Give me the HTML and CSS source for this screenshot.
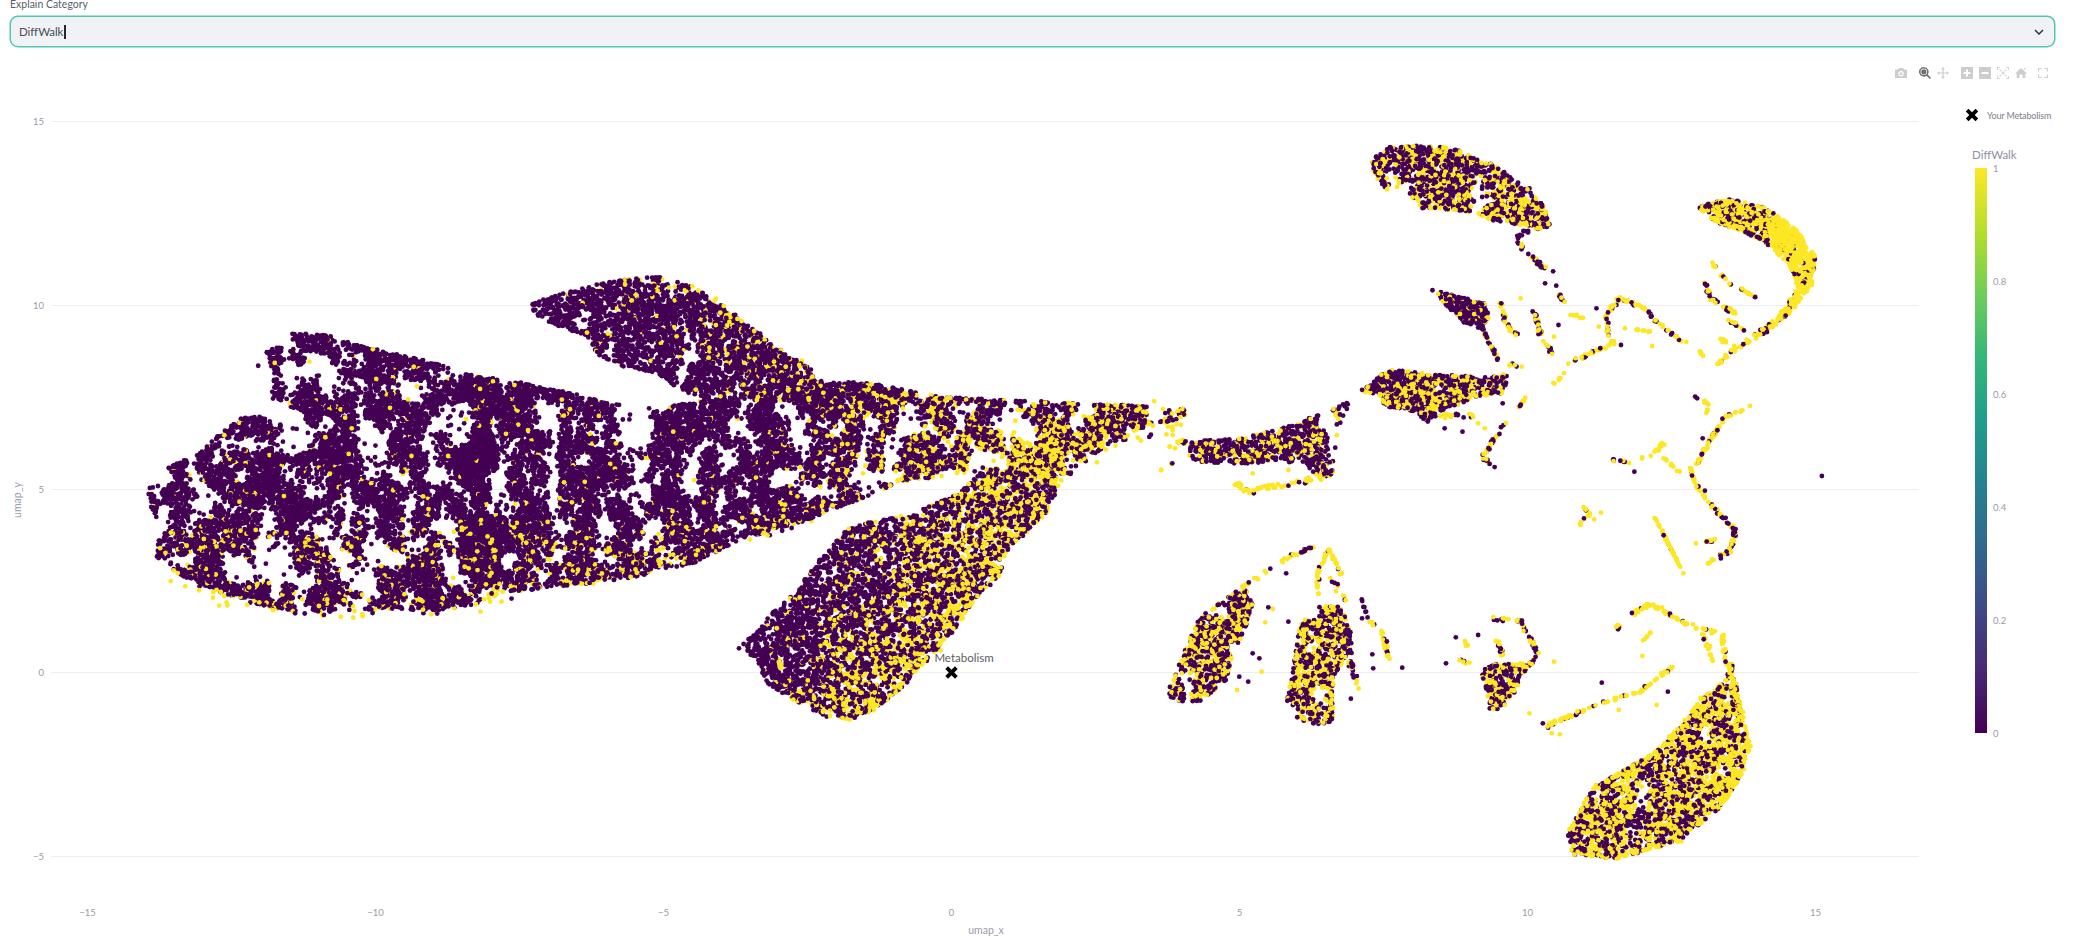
FILE: index.html
```html
<!DOCTYPE html>
<html lang="en">
<head>
<meta charset="utf-8">
<title>Explain Category</title>
<link rel="stylesheet" href="styles.css">
</head>
<body>
<main class="app">
  <section class="field">
    <label class="field-label">Explain Category</label>
    <div class="select">
      <span class="select-value">DiffWalk</span><span class="caret"></span>
      <svg class="chevron" viewBox="0 0 10 6"><path d="M1 1l4 4 4-4"/></svg>
    </div>
  </section>
  <section class="chart">
    <svg class="plot" viewBox="0 60 2083 883">
      <defs>
        <linearGradient id="viridis" x1="0" y1="1" x2="0" y2="0">
          <stop offset="0" stop-color="#440154"/><stop offset=".111" stop-color="#482878"/>
          <stop offset=".222" stop-color="#3e4989"/><stop offset=".333" stop-color="#31688e"/>
          <stop offset=".444" stop-color="#26828e"/><stop offset=".556" stop-color="#1f9e89"/>
          <stop offset=".667" stop-color="#35b779"/><stop offset=".778" stop-color="#6ece58"/>
          <stop offset=".889" stop-color="#b5de2b"/><stop offset="1" stop-color="#fde725"/>
        </linearGradient>
      </defs>
      <g class="grid">
        <path d="M51 121.500H1919"/><path d="M51 305.500H1919"/><path d="M51 489.500H1919"/><path d="M51 672.500H1919"/><path d="M51 856.500H1919"/>
      </g>
      <g class="ticks ticks-y">
        <text x="44" y="124.500">15</text><text x="44" y="308.500">10</text><text x="44" y="492.500">5</text><text x="44" y="675.500">0</text><text x="44" y="859.500">−5</text>
      </g>
      <g class="ticks ticks-x">
        <text x="87.500" y="916">−15</text><text x="375.500" y="916">−10</text><text x="663.500" y="916">−5</text><text x="951.500" y="916">0</text><text x="1239.500" y="916">5</text><text x="1527.500" y="916">10</text><text x="1815.500" y="916">15</text>
      </g>
      <text class="axis-title" x="986" y="934">umap_x</text>
      <text class="axis-title" transform="translate(21 500) rotate(-90)">umap_y</text>
      <text class="annotation" x="964" y="662">Metabolism</text>
      <path class="marker" transform="translate(951.500 672.500)" d="M-3.500-6.200L0-2.700 3.500-6.200 6.200-3.500 2.700 0 6.200 3.500 3.500 6.200 0 2.700-3.500 6.200-6.200 3.500-2.700 0-6.200-3.500z"/>
      <path class="marker" transform="translate(1972 115)" d="M-3.500-6.200L0-2.700 3.500-6.200 6.200-3.500 2.700 0 6.200 3.500 3.500 6.200 0 2.700-3.500 6.200-6.200 3.500-2.700 0-6.200-3.500z"/>
      <text class="legend-text" x="1987" y="118.500">Your Metabolism</text>
      <text class="colorbar-title" x="1972" y="159">DiffWalk</text>
      <rect class="colorbar" x="1975" y="168" width="12" height="565"/>
      <g class="ticks cb-ticks">
        <text x="1993" y="172">1</text><text x="1993" y="285">0.8</text><text x="1993" y="398">0.6</text><text x="1993" y="511">0.4</text><text x="1993" y="624">0.2</text><text x="1993" y="737">0</text>
      </g>
    </svg>
    <canvas id="points" class="points" width="2083" height="883"></canvas>
    <div class="modebar">
      <div class="mb-group">
        <svg class="mb-icon" viewBox="0 0 12 12"><path fill-rule="evenodd" d="M0 2.500h3L4 1h4l1 1.500h3V11H0zM6 4a2.700 2.700 0 100 5.400A2.700 2.700 0 006 4zm0 1.200a1.500 1.500 0 110 3 1.500 1.500 0 010-3z"/></svg>
      </div>
      <div class="mb-group">
        <svg class="mb-icon mb-active" viewBox="0 0 12 12"><path fill-rule="evenodd" d="M4.800 0a4.800 4.800 0 013.900 7.600L12 10.900 10.900 12 7.600 8.700A4.800 4.800 0 114.800 0zm0 1.500a3.300 3.300 0 100 6.600 3.300 3.300 0 000-6.600z"/><circle cx="4.800" cy="4.800" r="2.600"/></svg>
        <svg class="mb-icon" viewBox="0 0 12 12"><path d="M6 0l2 2.200H6.600v3.200h3.200V4L12 6 9.800 8V6.600H6.600v3.200H8L6 12 4 9.800h1.400V6.600H2.200V8L0 6l2.200-2v1.400h3.200V2.200H4z"/></svg>
      </div>
      <div class="mb-group">
        <svg class="mb-icon" viewBox="0 0 12 12"><path fill-rule="evenodd" d="M0 0h12v12H0zM5 2.500V5H2.500v2H5v2.500h2V7h2.500V5H7V2.500z"/></svg>
        <svg class="mb-icon" viewBox="0 0 12 12"><path fill-rule="evenodd" d="M0 0h12v12H0zM2.500 5v2h7V5z"/></svg>
        <svg class="mb-icon" viewBox="0 0 12 12"><path d="M0 0h3v.8H.8V3H0zM9 0h3v3h-.8V.8H9zM0 9h.8v2.200H3v.8H0zM11.200 9h.8v3H9v-.8h2.200zM2.500 2.500L4.500 3 3.800 3.700 6 5.300 8.200 3.700 7.500 3 9.500 2.500 9 4.500 8.300 3.800 6.700 6 8.300 8.200 9 7.500 9.500 9.500 7.500 9 8.200 8.300 6 6.700 3.800 8.300 4.500 9 2.500 9.500 3 7.500 3.700 8.200 5.300 6 3.700 3.800 3 4.500z"/></svg>
        <svg class="mb-icon" viewBox="0 0 12 12"><path d="M6 1l6 5.500h-1.700V11H7.500V7.500h-3V11H1.700V6.500H0zM9 1h1.400v2.200L9 2z"/></svg>
      </div>
      <div class="mb-group mb-last">
        <svg class="mb-icon" viewBox="0 0 12 12"><path d="M1 1h3.500v1H2v2.500H1zM7.500 1H11v3.500h-1V2H7.500zM1 7.500h1V10h2.500v1H1zM10 7.500h1V11H7.500v-1H10z"/></svg>
      </div>
    </div>
  </section>
</main>
<script src="script.js"></script>
</body>
</html>
```
FILE: styles.css
```css
* { box-sizing: border-box; }
html, body { margin: 0; height: 100%; overflow: hidden; background: #fff; }
body { font-family: "Lato", "Open Sans", sans-serif; color: #31333f; }
.app { width: 2083px; height: 943px; display: flex; flex-direction: column; }
.field { padding: 0 28px 0 10px; margin-top: -4px; }
.field-label { display: block; height: 20px; font-size: 10.500px; line-height: 16px; color: #5b5e6b; }
.select { height: 31px; display: flex; align-items: center; padding-left: 8px; border: 1px solid #50c8b0; border-radius: 8px; background: #f0f2f6; box-shadow: 0 0 0 .5px #50c8b0; }
.select-value { font-size: 11.500px; letter-spacing: -.1px; color: #4a4c58; }
.caret { width: 2px; height: 14px; margin-left: 1px; background: #262730; }
.chevron { width: 10px; height: 6px; margin-left: auto; margin-right: 10px; fill: none; stroke: #31333f; stroke-width: 1.500; }
.chart { position: relative; flex: 1; margin-top: 13px; }
.plot { display: block; width: 2083px; height: 883px; }
.points { position: absolute; left: 0; top: 0; }
.grid path { stroke: #eceef4; stroke-width: 1; fill: none; }
.ticks text { font-size: 9.500px; fill: #9a9ba8; }
.ticks-y text { text-anchor: end; }
.ticks-x text { text-anchor: middle; }
.axis-title { font-size: 10.500px; fill: #9a9cac; text-anchor: middle; }
.annotation { font-size: 11.500px; fill: #5c5c5c; text-anchor: middle; }
.marker { fill: #000; }
.legend-text { font-size: 9px; letter-spacing: -.15px; fill: #7c7d8a; }
.colorbar-title { font-size: 11.500px; fill: #8f90a2; }
.colorbar { fill: url(#viridis); }
.modebar { position: absolute; top: 7px; right: 34px; display: flex; gap: 12px; }
.mb-group { display: flex; gap: 6px; }
.mb-last { margin-left: -2px; }
.mb-icon { width: 12px; height: 12px; display: block; fill: #cdcdcd; }
.mb-active { fill: #6e6e6e; }
```
FILE: script.js
```js
(function () {
  var canvas = document.getElementById('points');
  var ctx = canvas.getContext('2d');
  var PURPLE = '#440154', YELLOW = '#fde725';

  // Seeded random numbers so that every load draws the same cloud.
  var seed = 20240611;
  function rnd() {
    seed = (seed + 0x6D2B79F5) | 0;
    var t = Math.imul(seed ^ (seed >>> 15), 1 | seed);
    t = (t + Math.imul(t ^ (t >>> 7), 61 | t)) ^ t;
    return ((t ^ (t >>> 14)) >>> 0) / 4294967296;
  }
  function gauss() { return (rnd() + rnd() + rnd() - 1.5) / 0.75; }

  // Coordinate frames the outlines were measured in.
  var F6 = { ox: 140, oy: 330, sx: 3, sy: 3 };
  var F7 = { ox: 500, oy: 260, sx: 2.178, sy: 3 };
  var F8 = { ox: 1150, oy: 130, sx: 2.24, sy: 3 };
  var F9 = { ox: 1150, oy: 500, sx: 2.24, sy: 3 };
  function toFull(f, p) { return [f.ox + p[0] / f.sx, f.oy + p[1] / f.sy]; }

  var points = [];
  function add(x, y, p) { points.push([x, y, rnd() < p ? 1 : 0]); }

  // Value noise for the clumpy texture of the large clusters.
  var lattice = {};
  function latticeAt(i, j) {
    var k = i + ':' + j;
    if (!(k in lattice)) lattice[k] = rnd();
    return lattice[k];
  }
  function noise(x, y, cx, cy) {
    var gx = x / cx, gy = y / cy, i = Math.floor(gx), j = Math.floor(gy);
    var u = gx - i, v = gy - j;
    u = u * u * (3 - 2 * u); v = v * v * (3 - 2 * v);
    var a = latticeAt(i, j), b = latticeAt(i + 1, j), c = latticeAt(i, j + 1), d = latticeAt(i + 1, j + 1);
    return (a * (1 - u) + b * u) * (1 - v) + (c * (1 - u) + d * u) * v;
  }

  function inside(poly, x, y) {
    var c = false;
    for (var i = 0, j = poly.length - 1; i < poly.length; j = i++) {
      var a = poly[i], b = poly[j];
      if ((a[1] > y) !== (b[1] > y) && x < (b[0] - a[0]) * (y - a[1]) / (b[1] - a[1]) + a[0]) c = !c;
    }
    return c;
  }

  var holes = [];
  function hole(f, line, w) { holes.push({ line: line.map(function (p) { return toFull(f, p); }), w: w }); }
  function inHole(x, y) {
    for (var h = 0; h < holes.length; h++) {
      var l = holes[h].line, r = holes[h].w / 2;
      for (var i = 0; i + 1 < l.length; i++) {
        var ax = l[i][0], ay = l[i][1], dx = l[i + 1][0] - ax, dy = l[i + 1][1] - ay;
        var t = Math.max(0, Math.min(1, ((x - ax) * dx + (y - ay) * dy) / (dx * dx + dy * dy)));
        var ex = ax + t * dx - x, ey = ay + t * dy - y;
        if (ex * ex + ey * ey < r * r) return true;
      }
    }
    return false;
  }

  // Fill a polygon. y is the share of yellow, a number or a function of frame coordinates.
  // With `textured`, points thin out softly where the noise rises above that level.
  function area(f, outline, density, y, textured) {
    var poly = outline.map(function (p) { return toFull(f, p); });
    var xs = poly.map(function (p) { return p[0]; }), ys = poly.map(function (p) { return p[1]; });
    var x0 = Math.min.apply(null, xs), x1 = Math.max.apply(null, xs);
    var y0 = Math.min.apply(null, ys), y1 = Math.max.apply(null, ys);
    var tries = Math.round((x1 - x0) * (y1 - y0) * density);
    for (var n = 0; n < tries; n++) {
      var x = x0 + rnd() * (x1 - x0), yy = y0 + rnd() * (y1 - y0);
      if (!inside(poly, x, yy)) continue;
      if (textured) {
        var wx = x + gauss() * 3, wy = yy + gauss() * 3;
        var v = noise(wx, wy, 12, 17) * 0.75 + noise(wx, wy, 6, 6) * 0.25;
        var keep = Math.max(0.02, Math.min(1, (textured - v) / 0.09));
        if (inHole(wx, wy)) keep *= 0.08;
        if (rnd() > keep) continue;
      }
      var p = typeof y === 'function' ? y((x - f.ox) * f.sx, (yy - f.oy) * f.sy) : y;
      add(x, yy, p);
    }
  }

  // Scatter points along a polyline.
  function line(f, path, w, n, y) {
    var pts = path.map(function (p) { return toFull(f, p); });
    var lens = [], total = 0;
    for (var i = 0; i + 1 < pts.length; i++) {
      var l = Math.hypot(pts[i + 1][0] - pts[i][0], pts[i + 1][1] - pts[i][1]);
      lens.push(l); total += l;
    }
    for (var k = 0; k < n; k++) {
      var d = rnd() * total, s = 0;
      while (s < lens.length - 1 && d > lens[s]) { d -= lens[s]; s++; }
      var t = d / lens[s];
      add(pts[s][0] + (pts[s + 1][0] - pts[s][0]) * t + gauss() * w / 2,
          pts[s][1] + (pts[s + 1][1] - pts[s][1]) * t + gauss() * w / 2, y);
    }
  }
  function dots(f, list, y) {
    list.forEach(function (p) { var q = toFull(f, p); add(q[0], q[1], y); });
  }

  /* ---- gaps in the large cluster ---- */
  hole(F6, [[430, 340], [500, 330]], 24);
  hole(F6, [[520, 400], [510, 470]], 10);
  hole(F6, [[680, 300], [700, 420]], 24);
  hole(F6, [[220, 490], [60, 540]], 6);
  hole(F6, [[500, 590], [530, 610]], 16);
  hole(F6, [[690, 650], [680, 720]], 20);
  hole(F6, [[950, 230], [940, 320]], 14);
  hole(F6, [[1060, 260], [1070, 350]], 9);
  hole(F6, [[1070, 470], [1110, 540]], 16);
  hole(F6, [[820, 490], [800, 620]], 9);
  hole(F6, [[620, 500], [520, 560]], 8);
  hole(F6, [[310, 640], [430, 650]], 5);
  hole(F6, [[240, 340], [480, 350]], 12);
  hole(F7, [[120, 450], [115, 700], [130, 900]], 11);
  hole(F7, [[310, 460], [310, 620]], 13);
  hole(F7, [[220, 700], [240, 830]], 9);
  hole(F7, [[420, 730], [430, 800]], 9);
  hole(F7, [[480, 560], [490, 640]], 10);
  hole(F7, [[540, 510], [560, 570]], 11);
  hole(F7, [[240, 700], [320, 680]], 8);
  hole(F7, [[700, 490], [730, 520]], 9);
  hole(F7, [[1050, 590], [1090, 610]], 18);
  hole(F7, [[150, 780], [130, 880]], 7);
  hole(F7, [[350, 790], [350, 870]], 7);
  hole(F7, [[820, 560], [870, 600]], 8);

  /* ---- left body and tail ---- */
  area(F6, [[340, 85], [420, 45], [445, 8], [560, 15], [650, 45], [740, 65], [850, 90], [1000, 135], [1080, 148], [1080, 810], [900, 840], [700, 840], [510, 850], [400, 835], [250, 790], [130, 740], [50, 680], [40, 560], [20, 470], [60, 425], [180, 365], [230, 320], [310, 260], [380, 260], [440, 285], [480, 300], [500, 250], [400, 215], [390, 150], [360, 120]], 0.21,
    function (x, y) { return y > 600 ? 0.13 : 0.03; }, 0.6);
  area(F7, [[-88, 350], [0, 370], [40, 365], [80, 380], [160, 400], [240, 430], [330, 445], [450, 420], [590, 415], [680, 360], [810, 370], [960, 410], [1100, 420], [1280, 430], [1490, 445], [1495, 470], [1390, 510], [1290, 590], [1220, 670], [1060, 630], [880, 665], [760, 730], [650, 790], [520, 840], [430, 905], [300, 950], [170, 975], [60, 990], [-88, 1020]], 0.2,
    function (x, y) {
      var base = Math.max(0.03, (x - 550) / 1500 + 0.03) + (y > 780 ? 0.1 : 0);
      if (x > 1000) return Math.min(0.55, base * 0.6 + Math.max(0, (y - 450) / 220) * 0.4);
      return Math.min(0.34, base);
    }, 0.64);

  /* ---- upper fin ---- */
  area(F7, [[70, 130], [170, 85], [280, 55], [370, 50], [450, 110], [520, 175], [590, 250], [680, 330], [700, 420], [560, 420], [450, 420], [390, 390], [340, 340], [270, 320], [210, 285], [190, 230], [130, 200], [75, 165]], 0.15,
    function (x, y) { return 0.03 + Math.max(0, (x - y * 0.6 - 170) / 1700); }, 0.78);
  line(F7, [[340, 55], [430, 95], [520, 180], [600, 270], [680, 340]], 6, 50, 0.55);

  /* ---- lower lobe ---- */
  area(F7, [[520, 1165], [600, 1050], [640, 1000], [690, 910], [760, 800], [900, 760], [1000, 700], [1060, 620], [1220, 670], [1190, 760], [1100, 880], [1090, 950], [1040, 1010], [980, 1130], [920, 1210], [870, 1290], [820, 1350], [760, 1380], [710, 1370], [640, 1320], [580, 1270], [560, 1200]], 0.13,
    function (x, y) { var t = (x + y * 0.5 - 1170) / 400; return Math.max(0.06, Math.min(0.47, 0.06 + t * 0.5)); }, 0);

  /* ---- yellow edges of the large cluster ---- */
  line(F6, [[100, 720], [240, 790], [450, 830], [660, 830], [900, 830], [1100, 790]], 15, 90, 0.72);
  line(F7, [[140, 965], [280, 930], [400, 890], [520, 830], [620, 790], [700, 740]], 10, 70, 0.8);
  line(F7, [[1060, 680], [1200, 600], [1320, 530], [1490, 455]], 28, 110, 0.7);
  line(F7, [[950, 1180], [1000, 1000], [1080, 820], [1180, 720]], 18, 50, 0.7);
  line(F7, [[820, 1340], [880, 1270], [930, 1190]], 3, 22, 0.85);
  dots(F7, [[1440, 630], [1462, 612], [1458, 560], [1470, 565], [1465, 510], [1465, 525]], 1);
  line(F7, [[1480, 545], [1568, 590]], 6, 30, 0.4);

  /* ---- upper right ---- */
  area(F8, [[495, 90], [540, 48], [620, 45], [700, 60], [770, 105], [840, 170], [885, 230], [895, 285], [860, 290], [780, 275], [700, 245], [610, 235], [570, 180], [530, 180], [500, 130]], 0.17,
    function (x, y) { return 0.12 + x / 2800; }, 0.76);
  line(F8, [[780, 180], [870, 230], [895, 285]], 5, 30, 0.8);
  line(F8, [[895, 285], [840, 305], [820, 325], [840, 365], [890, 420]], 3, 45, 0.35);
  dots(F8, [[885, 460], [910, 467], [903, 424], [850, 175]], 0);
  area(F8, [[630, 478], [750, 520], [760, 560], [745, 605], [700, 575], [660, 520]], 0.24, 0.22, 0);
  line(F8, [[745, 600], [780, 690]], 2.500, 24, 0.4);
  line(F8, [[785, 520], [800, 590], [825, 620]], 4, 30, 0.7);
  line(F8, [[860, 545], [880, 630], [905, 675]], 3, 34, 0.5);
  line(F8, [[915, 495], [930, 520]], 2, 8, 0.4);
  line(F8, [[940, 550], [970, 565]], 2, 8, 1);
  line(F8, [[785, 700], [835, 710]], 2, 6, 0.5);
  line(F8, [[905, 760], [930, 730]], 2, 7, 0.9);
  line(F8, [[825, 835], [845, 790]], 2, 8, 0.8);
  line(F8, [[1050, 505], [1105, 530], [1130, 570], [1200, 640]], 2.500, 45, 0.8);
  line(F8, [[1060, 595], [1130, 605]], 1.500, 9, 1);
  line(F8, [[1230, 660], [1240, 680]], 1, 4, 1);
  line(F8, [[1050, 505], [1020, 560], [1030, 630], [1040, 640], [970, 680], [935, 700]], 2.500, 60, 0.75);
  dots(F8, [[1005, 590], [1000, 535], [830, 505], [905, 620], [915, 585], [1125, 648], [1055, 645]], 0.5);
  area(F8, [[1225, 230], [1300, 205], [1380, 235], [1450, 300], [1490, 380], [1485, 460], [1440, 540], [1380, 610], [1340, 625], [1410, 560], [1450, 470], [1430, 400], [1380, 340], [1320, 300], [1270, 280]], 0.24,
    function (x) { return x > 1390 ? 0.88 : 0.6; }, 0);
  line(F8, [[1440, 520], [1380, 600], [1300, 665], [1272, 705]], 3, 60, 0.88);
  line(F8, [[1260, 400], [1300, 465]], 2, 14, 0.75);
  line(F8, [[1240, 450], [1260, 510], [1310, 550]], 4, 34, 0.55);
  line(F8, [[1325, 475], [1365, 510]], 2, 12, 0.7);
  line(F8, [[1300, 570], [1330, 600]], 3, 10, 0.7);
  line(F8, [[1280, 630], [1290, 640]], 3, 6, 1);
  area(F8, [[470, 780], [520, 730], [550, 718], [650, 735], [750, 740], [805, 730], [790, 790], [740, 800], [640, 850], [620, 880], [600, 850], [530, 830], [510, 800]], 0.2, 0.4, 0.78);
  line(F8, [[640, 860], [725, 855]], 4, 18, 0.6);
  dots(F8, [[660, 895], [700, 905], [735, 880], [790, 820], [750, 895]], 0.7);
  line(F8, [[795, 880], [745, 980], [770, 1010]], 2.500, 36, 0.6);
  area(F8, [[80, 935], [210, 925], [330, 880], [450, 810], [420, 900], [410, 1030], [390, 1045], [300, 990], [210, 1005], [140, 1000], [90, 990]], 0.17, 0.25, 0.72);
  line(F8, [[190, 1060], [220, 1085], [350, 1050], [410, 1030]], 4, 55, 0.82);
  dots(F8, [[45, 950], [25, 1020], [50, 1000], [230, 1030], [310, 1020], [50, 890]], 0.8);
  line(F8, [[1220, 800], [1250, 820], [1245, 850]], 2, 12, 0.9);
  line(F8, [[1345, 830], [1290, 860], [1260, 920], [1225, 1000]], 2.500, 55, 0.85);
  line(F8, [[1210, 1010], [1220, 1060], [1245, 1105]], 1.500, 26, 0.92);
  line(F8, [[1020, 985], [1080, 1000]], 2, 10, 0.1);
  line(F8, [[1080, 985], [1120, 985], [1150, 940]], 2.500, 14, 1);
  line(F8, [[1150, 985], [1200, 1040]], 2, 10, 0.9);
  dots(F8, [[1505, 1038], [1085, 1025], [1238, 925], [1243, 1082]], 0);

  /* ---- lower right ---- */
  area(F9, [[35, 585], [70, 480], [100, 380], [130, 320], [215, 270], [230, 310], [210, 400], [180, 490], [170, 550], [110, 605], [70, 605]], 0.17, 0.45, 0.68);
  line(F9, [[130, 340], [230, 240], [320, 165], [365, 142]], 2.500, 45, 0.62);
  line(F9, [[200, 300], [180, 400], [140, 520]], 10, 50, 0.35);
  dots(F9, [[200, 530], [250, 515], [230, 460], [245, 475], [220, 545], [195, 570], [265, 322], [305, 220], [258, 367], [275, 327], [310, 365]], 0.3);
  area(F9, [[305, 620], [320, 500], [335, 380], [370, 310], [430, 320], [450, 400], [440, 470], [410, 530], [410, 660], [380, 680], [320, 650]], 0.18, 0.5, 0.7);
  line(F9, [[375, 290], [375, 220], [400, 150], [430, 225]], 2.500, 40, 0.9);
  line(F9, [[470, 290], [490, 360], [525, 410], [535, 490]], 3, 36, 0.55);
  line(F9, [[440, 380], [450, 500], [465, 570]], 5, 40, 0.4);
  line(F9, [[400, 230], [440, 300]], 4, 10, 0.6);
  dots(F9, [[565, 503], [500, 505], [450, 596], [498, 463], [475, 355]], 0);
  line(F9, [[765, 355], [830, 365], [870, 460], [830, 530]], 2.500, 50, 0.5);
  area(F9, [[740, 510], [780, 490], [850, 490], [820, 570], [785, 635], [760, 625], [750, 560]], 0.16, 0.5, 0);
  line(F9, [[780, 425], [790, 470]], 3, 14, 0.85);
  line(F9, [[690, 480], [715, 490]], 2, 8, 0.7);
  line(F9, [[700, 415], [710, 440]], 2, 6, 0.8);
  dots(F9, [[663, 490], [685, 412], [905, 485], [850, 640], [735, 405]], 0.2);
  line(F9, [[885, 680], [1010, 610], [1100, 575], [1170, 500]], 2.500, 75, 0.82);
  dots(F9, [[900, 700], [918, 703], [880, 670], [1012, 548], [1050, 630], [1160, 575], [1135, 615], [1103, 468]], 0.55);
  area(F9, [[945, 1060], [935, 1010], [990, 870], [1060, 810], [1130, 760], [1190, 680], [1240, 590], [1290, 540], [1300, 490], [1340, 740], [1320, 830], [1270, 930], [1190, 1020], [1100, 1055], [1040, 1072]], 0.14,
    function (x, y) { return 0.46 + Math.max(0, (x - 1100) / 1100); }, 0.8);
  line(F9, [[1300, 490], [1340, 740], [1320, 830], [1270, 930]], 3, 100, 0.85);
  line(F9, [[935, 1010], [990, 870], [1130, 760], [1190, 680], [1240, 590]], 3, 80, 0.85);
  line(F9, [[945, 1060], [1040, 1072], [1190, 1020]], 3, 50, 0.75);
  line(F9, [[1290, 490], [1280, 400], [1220, 385], [1165, 345], [1125, 310], [1080, 340]], 3, 75, 0.9);
  line(F9, [[1240, 400], [1260, 480]], 3, 16, 0.9);
  line(F9, [[1050, 375], [1050, 395]], 3, 7, 0.6);
  line(F9, [[1105, 420], [1125, 395]], 2, 6, 1);
  line(F9, [[1130, 50], [1195, 220]], 1, 38, 0.94);
  line(F9, [[1250, 5], [1310, 90], [1300, 150], [1250, 190]], 3, 55, 0.5);
  line(F9, [[1220, 130], [1265, 120]], 2, 10, 0.6);
  line(F9, [[965, 15], [985, 40], [960, 80]], 2, 14, 0.75);
  dots(F9, [[995, 58], [1010, 38]], 0.5);

  // Shuffle so that the two colours overlap as in a single trace.
  for (var i = points.length - 1; i > 0; i--) {
    var j = Math.floor(rnd() * (i + 1)), t = points[i];
    points[i] = points[j]; points[j] = t;
  }

  ctx.translate(0, -60);
  points.forEach(function (p) {
    ctx.fillStyle = p[2] ? YELLOW : PURPLE;
    ctx.beginPath();
    ctx.arc(p[0], p[1], 2.400, 0, Math.PI * 2);
    ctx.fill();
  });
})();
```
